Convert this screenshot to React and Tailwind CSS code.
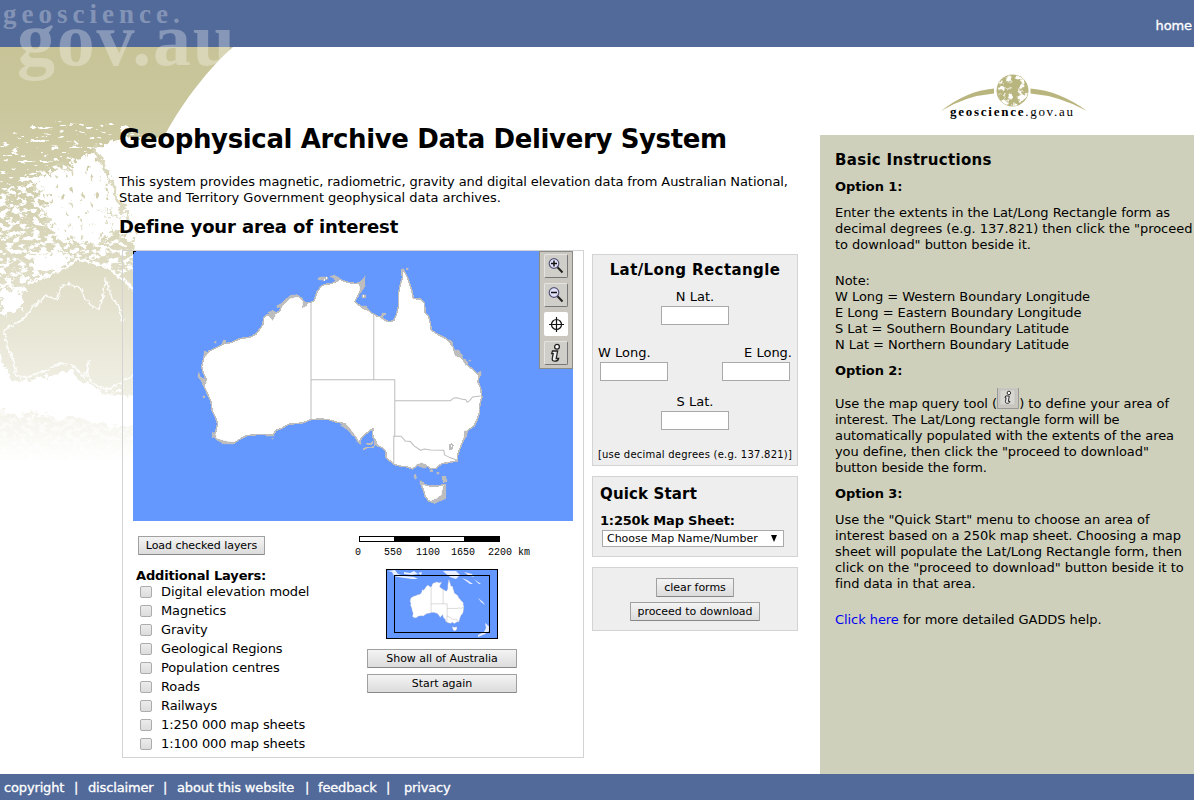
import React from "react";

const COAST =
  "M392 155 L400 152 405 140 410 124 420 110 430 102 452 99 470 92 478 86 492 92 505 96 528 99 540 95 552 84 552 102 546 112 538 124 532 138 524 152 534 162 548 174 562 178 575 188 590 197 605 200 612 208 626 214 640 210 648 192 654 168 654 130 660 100 666 82 664 58 672 62 680 78 686 96 694 118 698 142 710 146 722 146 732 158 734 186 744 198 750 220 752 238 766 248 780 256 796 264 808 276 818 290 824 310 842 318 852 336 868 350 884 364 896 376 892 394 900 412 904 440 898 462 896 490 888 512 880 528 862 540 852 562 840 590 832 612 830 632 800 638 784 640 766 654 752 656 736 646 722 640 708 648 696 656 680 650 660 648 640 642 626 630 616 622 616 604 604 592 590 586 586 572 578 562 576 548 578 534 566 544 554 552 542 566 534 576 526 562 514 546 500 534 494 520 470 516 444 508 420 506 392 508 366 518 326 522 304 534 288 540 278 554 240 552 200 556 180 566 160 580 130 578 110 568 98 556 106 546 112 520 106 502 96 482 92 454 84 436 76 418 68 400 78 388 68 364 64 348 72 318 86 302 108 292 130 280 154 276 180 264 210 260 228 250 238 236 248 222 250 202 262 192 276 204 282 190 298 182 304 166 318 152 332 136 350 134 364 144 374 158Z";
const TAS = "M720 700 L734 704 752 708 770 708 794 702 794 728 788 744 776 752 762 758 744 752 734 738 730 722Z";

function Australia({ borders = true, sw = 4.5 }) {
  return (
    <g fill="#fff" stroke="#bdbdbd" strokeWidth={sw} strokeLinejoin="round">
      <path d={COAST} />
      <path d={TAS} />
      <g fill="none" strokeWidth={borders ? 3 : 8}>
        <path d="M392 155V508M580 190V388M392 388H643V558H640V642M643 451H810L818 444 828 442 842 446 856 448 860 456 868 450 876 440 900 437" />
        <path d="M640 558H662L674 572 690 574 700 586 720 600 732 596 750 599 790 600 792 614 808 622 830 630" />
      </g>
      {borders && (
        <g>
          <path d="M808 584l6 -3 4 4 -4 10 -5 3z" />
          <path d="M548 598l10 -6 14 0 10 -3M558 580l14 2 6 -8" fill="none" strokeWidth="5" />
          <g fill="#bdbdbd" strokeWidth="1">
            <path d="M412 84l8 -5 20 -1 4 8 -14 4 -16 -2zM448 78l14 -5 10 6 8 4 -6 8 -10 -1 -4 -6zM262 186l16 -7 8 6 -2 12 -8 14 -4 -14zM288 166l16 -8 14 -14 14 -10 16 -2 10 6 -14 2 -16 4 -12 12 -14 14 -10 2zM534 96l12 -6 9 -16 -4 20 4 12 -8 12 -4 8 -8 8 4 -22z" />
            <path d="M544 132h12v10h-12zM664 54h6v8h-6zM678 52h6v5h-6zM604 188h12v5l-8 3v10h-6zM52 378l4 -14 5 16 14 6 4 12 -8 6 -10 -14zM102 276l6 -6v10zM128 270h8v10h-10zM68 436h5v6h-5zM72 302l8 2 -2 14h-8zM804 266l12 8 0 14 8 10 12 0 2 8 10 10 -6 6 -18 -6 -6 -22zM848 328l6 -2 10 12 -8 8zM864 329h6v4h-6zM892 366l8 -4 3 12 -8 6z" />
            <path d="M368 152l10 4 2 10 -14 6zM540 166h18l6 14 -14 -4zM478 524l18 -4 12 14 16 22 -8 0 -16 -18zM526 572l14 0 2 12zM580 566l10 16 -8 6zM706 644l18 -6 14 6v10l-14 -2zM748 658h8v6h-8zM700 674l6 -2 3 12 -6 4zM784 678l12 0 4 16 -12 4zM718 690l14 8 -4 8 -10 -4zM768 666h8v6h-8zM790 702l7 0 -2 44 -14 6 -18 8 -16 -6 20 -8 16 -12zM852 542l10 0 -4 18 -8 10z" />
            <path d="M274 564h5v3h-5zM256 553h26v5h-26zM112 566l28 8 22 2 -4 6 -32 -2zM96 546l8 2 4 12 -12 2z" />
          </g>
          <path d="M549 137h2M430 88h4M436 83h3" fill="none" stroke="#fff" />
        </g>
      )}
    </g>
  );
}

function GlobeBackdrop() {
  return (
    <svg className="absolute left-0 top-0 -z-10" width="250" height="430" viewBox="0 47 250 430" aria-hidden="true">
      <defs>
        <linearGradient id="olive" x1="0" y1="47" x2="0" y2="462" gradientUnits="userSpaceOnUse">
          <stop offset="0" stopColor="#c8c498" />
          <stop offset=".12" stopColor="#c9c69b" />
          <stop offset=".35" stopColor="#d2cfae" />
          <stop offset=".6" stopColor="#e3e1cd" />
          <stop offset=".85" stopColor="#f1f0e6" />
          <stop offset="1" stopColor="#fff" />
        </linearGradient>
        <filter id="rough" x="-10%" y="-10%" width="120%" height="120%" colorInterpolationFilters="sRGB">
          <feTurbulence type="fractalNoise" baseFrequency=".13" numOctaves="4" seed="4" result="n" />
          <feDisplacementMap in="SourceGraphic" in2="n" scale="17" xChannelSelector="R" yChannelSelector="G" />
        </filter>
        <filter id="jagged" x="-10%" y="-10%" width="120%" height="120%" colorInterpolationFilters="sRGB">
          <feTurbulence type="fractalNoise" baseFrequency=".25" numOctaves="3" seed="7" result="n" />
          <feDisplacementMap in="SourceGraphic" in2="n" scale="6" xChannelSelector="R" yChannelSelector="G" />
        </filter>
        <filter id="sparse" x="0" y="0" width="100%" height="100%" colorInterpolationFilters="sRGB">
          <feTurbulence type="fractalNoise" baseFrequency=".1 .3" numOctaves="5" seed="9" />
          <feColorMatrix values="0 0 0 0 0  0 0 0 0 0  0 0 0 0 0  14 0 0 0 -8.9" />
          <feComposite in2="SourceGraphic" operator="in" />
        </filter>
        <filter id="dense" x="0" y="0" width="100%" height="100%" colorInterpolationFilters="sRGB">
          <feTurbulence type="fractalNoise" baseFrequency=".15 .22" numOctaves="5" seed="21" />
          <feColorMatrix values="0 0 0 0 0  0 0 0 0 0  0 0 0 0 0  10 0 0 0 -4.9" />
          <feComposite in2="SourceGraphic" operator="in" />
        </filter>
        <filter id="islets" x="0" y="0" width="100%" height="100%" colorInterpolationFilters="sRGB">
          <feTurbulence type="fractalNoise" baseFrequency=".2 .14" numOctaves="5" seed="33" />
          <feColorMatrix values="0 0 0 0 1  0 0 0 0 1  0 0 0 0 1  10 0 0 0 -6.5" />
          <feComposite in2="SourceGraphic" operator="in" />
        </filter>
        <mask id="land" maskUnits="userSpaceOnUse" x="0" y="47" width="250" height="430">
          <path d="M0 47H233C210 67 184 100 166 133L150 152 137 190 134 260V477H0Z" fill="#fff" />
          <path filter="url(#sparse)" d="M0 138L40 122 90 120 160 130 120 140 90 150 50 168 0 200Z" />
          <path filter="url(#dense)" d="M0 195L26 175 60 164 60 210 100 235 145 225V280L120 272 75 256 30 282 0 300Z" />
          <g filter="url(#rough)">
            <path d="M36 180L60 169 90 154 108 142 124 138 180 138 168 250 140 236 118 230 100 244 60 240 50 226 44 206Z" />
            <path d="M0 290L22 286 24 308 6 314 0 314Z" />
            <path d="M32 256L58 250 74 258 62 270 36 272Z" />
            <path d="M-9 350L0 352 10 378 22 381 45 376 66 371 84 382 100 391 128 394 150 396V426H112L50 416 20 414 -9 410Z" />
          </g>
          <path filter="url(#islets)" d="M36 180L90 150 112 176 130 210 142 240 100 240 50 240Z" />
          <path d="M94 148C103 170 112 180 118 200L130 222" fill="none" stroke="#ccc" strokeWidth="3.500" filter="url(#rough)" />
          <path d="M32 188l12 3M44 205l4 22M60 165l12 4M102 208l18 10" fill="none" stroke="#ccc" strokeWidth="2" filter="url(#rough)" />
          <g fill="none" stroke="#000" strokeWidth="1.8" filter="url(#jagged)">
            <path strokeOpacity=".85" d="M4 330L22 320 34 306 46 296 57 299 61 287 69 284 82 289 84 298 92 306 99 309 103 296 106 280 112 298 119 306 123 322M4 330L7 346 14 362 16 376 28 377 45 371 60 363 74 366 84 377 89 361 87 376 96 386 110 389 134 375" />
            <path strokeWidth="2.500" d="M28 284L50 274 66 268 76 259 95 263 110 269 124 280 134 290" />
          </g>
          <path filter="url(#dense)" d="M0 408H140V462H0Z" opacity=".5" />
        </mask>
      </defs>
      <rect y="47" width="250" height="430" fill="url(#olive)" mask="url(#land)" />
    </svg>
  );
}

function InfoGlyph() {
  return (
    <g>
      <circle cx="13" cy="5.800" r="2.400" fill="#fff" stroke="#222" strokeWidth="1.3" />
      <path d="M8.500 10h5.100l-1.400 7.500h2.400c-.4 1.900-1.800 2.700-3.800 2.700-2.200 0-2.900-1.300-2.500-3l.9-4.600H7.700z" fill="#eee" stroke="#222" strokeWidth="1.3" />
    </g>
  );
}

function ToolButton({ kind }) {
  const active = kind === "target";
  return (
    <button
      aria-label={kind}
      className={
        active
          ? "block size-6 rounded-[2px] bg-white"
          : "block size-6 rounded-[2px] border border-t-[#e6e4e0] border-l-[#e6e4e0] border-r-[#777] border-b-[#777] bg-[#d0cec8]"
      }
    >
      <svg width="24" height="24" viewBox="0 0 24 24" className={active ? "block" : "-m-px block"}>
        {(kind === "in" || kind === "out") && (
          <g fill="none" stroke="#333" strokeWidth="1.2">
            <circle cx="10" cy="9.5" r="4.8" fill="#e2e2fa" stroke="#555577" />
            <path d="M13.5 13.3L18.5 18.5" stroke="#222" strokeWidth="2" />
            <path d={kind === "in" ? "M7 9.5h6M10 6.5v6" : "M7 9.5h6"} stroke="#111" strokeWidth="1.5" />
          </g>
        )}
        {active && <path d="M12.500 5v15M5 12.500h15M17.500 12.500a5 5 0 1 1-10 0a5 5 0 1 1 10 0" fill="none" stroke="#111" strokeWidth="1.2" />}
        {kind === "info" && <InfoGlyph />}
      </svg>
    </button>
  );
}

function Button({ className = "", children }) {
  return (
    <button
      className={
        "block h-[19px] rounded-[1px] border border-[#a0a0a0] border-b-[#888] bg-linear-to-b from-[#f4f4f4] to-[#dcdcdc] text-[11px] leading-[18px] tracking-[-0.04px] whitespace-nowrap text-black " +
        className
      }
    >
      {children}
    </button>
  );
}

function Field({ label, className = "", labelClass = "" }) {
  return (
    <label className={"flex flex-col text-[13px] leading-4 " + className}>
      <span className={labelClass}>{label}</span>
      <input className="mx-0.5 mt-px h-[19px] w-[68px] border border-[#a9a9a9] bg-white" />
    </label>
  );
}

const layers = [
  "Digital elevation model",
  "Magnetics",
  "Gravity",
  "Geological Regions",
  "Population centres",
  "Roads",
  "Railways",
  "1:250 000 map sheets",
  "1:100 000 map sheets",
];

function MapPanel() {
  return (
    <section className="ml-[122px] h-[508px] w-[462px] border border-[#d3d3d3] pl-2.5">
      <div className="flex h-[270px] w-[440px] bg-[#6598ff]">
        <svg width="407" height="270" viewBox="0 0 407 270" shapeRendering="crispEdges">
          <g transform="translate(47.300 -.7) scale(.3345 .3335)">
            <Australia />
          </g>
          <path d="M0 3V0H3" fill="none" stroke="#000" strokeWidth="1.5" />
        </svg>
        <div className="flex h-[118px] w-[34px] flex-col items-center gap-[5px] border border-[#8b8b86] bg-[#c9c7bf] pt-0.5">
          <ToolButton kind="in" />
          <ToolButton kind="out" />
          <ToolButton kind="target" />
          <ToolButton kind="info" />
        </div>
      </div>
      <div className="flex">
        <div className="w-[225px] pt-[15px] pl-[5px]">
          <Button className="w-[127px]">Load checked layers</Button>
          <p className="mt-[13px] -ml-0.5 text-[13px] leading-4 font-bold tracking-[-0.16px]">Additional Layers:</p>
          <ul className="-mt-0.5 ml-0.5">
            {layers.map((name) => (
              <li key={name}>
                <label className="flex h-[19px] items-center text-[13px] tracking-[-0.12px]">
                  <input
                    type="checkbox"
                    className="mt-px mr-[9px] size-3 appearance-none rounded-[2px] border border-[#acacac] bg-linear-to-b from-[#ececec] to-[#dcdcdc]"
                  />
                  <span className="whitespace-nowrap">{name}</span>
                </label>
              </li>
            ))}
          </ul>
        </div>
        <div className="pt-[15px]">
          <div className="ml-px flex h-1.5 w-[141px] border border-black bg-white">
            <span className="w-[34px]" />
            <span className="w-9 bg-black" />
            <span className="w-[34px]" />
            <span className="flex-1 bg-black" />
          </div>
          <div className="mt-[5px] -ml-[3px] flex font-['Liberation_Mono',monospace] text-[10px] leading-3 tracking-normal whitespace-nowrap">
            <span className="w-[29px]">0</span>
            <span className="w-8">550</span>
            <span className="w-[35px]">1100</span>
            <span className="w-[37px]">1650</span>
            <span>2200 km</span>
          </div>
          <svg width="112" height="70" viewBox="0 0 112 70" className="mt-2.5 ml-7 block">
            <rect x=".5" y=".5" width="111" height="69" fill="#6598ff" stroke="#000" />
            <path
              d="M2 2l4 1 2 4 4 1 14 2 6 0-4-2-10-1-6-2-3-4zM18 3l6 1 4-2 4 3-6 1-8-1zM32 4l3 2 1-3zM57 2h13l4 4-4 4-6-2-5-4zM76 9l5 2 6 4-3 0zM78 3l8 2 2 3-6-2zM88 10l7 5-2 0zM92 29l5 4 2 3-4-3zM99 54l5 4-1 4-4 3-7 3 0-2 6-3 2-4z"
              fill="#e9efff"
            />
            <g transform="translate(20 6.5) scale(.064 .073)">
              <Australia borders={false} />
            </g>
            <rect x="8.5" y="6.5" width="95" height="57" fill="none" stroke="#000" />
          </svg>
          <div className="mt-2.5 ml-[9px] flex w-[150px] flex-col gap-1.5">
            <Button>Show all of Australia</Button>
            <Button>Start again</Button>
          </div>
        </div>
      </div>
    </section>
  );
}

function Forms() {
  return (
    <div className="mt-1 ml-2 flex w-[206px] flex-col gap-2.5">
      <section className="h-[212px] border border-[#d3d3d3] bg-[#eee] px-[5px] pt-[7px]">
        <h3 className="text-center text-[15px] leading-4 font-bold tracking-[0.4px] whitespace-nowrap">Lat/Long Rectangle</h3>
        <Field label="N Lat." className="mt-[11px] items-center" />
        <div className="mt-5 flex justify-between">
          <Field label="W Long." className="items-center" labelClass="self-start" />
          <Field label="E Long." className="items-center" labelClass="self-end" />
        </div>
        <Field label="S Lat." className="mt-[13px] items-center" />
        <p className="mt-[17px] flex justify-center text-[10px] leading-4 tracking-[0.23px] whitespace-nowrap">[use decimal degrees (e.g. 137.821)]</p>
      </section>
      <section className="h-[81px] border border-[#d3d3d3] bg-[#eee] px-[7px] pt-[9px]">
        <h3 className="text-[15px] leading-4 font-bold tracking-[0.15px]">Quick Start</h3>
        <p className="mt-[11px] text-[13px] leading-4 font-bold tracking-[-0.18px]">1:250k Map Sheet:</p>
        <button className="mt-px ml-0.5 flex h-[17px] w-[182px] items-center justify-between border border-[#a9a9a9] bg-white pr-1.5 pl-1 text-[11px] tracking-[-0.02px] whitespace-nowrap">
          <span className="pt-px">Choose Map Name/Number</span>
          <svg width="6" height="7" viewBox="0 0 6 7">
            <path d="M0 0H6L3 7Z" />
          </svg>
        </button>
      </section>
      <section className="flex h-16 flex-col items-center gap-[5px] border border-[#d3d3d3] bg-[#eee] pt-2.5">
        <Button className="w-[78px]">clear forms</Button>
        <Button className="w-[130px]">proceed to download</Button>
      </section>
    </div>
  );
}

function Logo() {
  return (
    <svg width="160" height="54" viewBox="935 70 160 54">
      <defs>
        <filter id="logoLand" x="0" y="0" width="100%" height="100%" colorInterpolationFilters="sRGB">
          <feTurbulence type="fractalNoise" baseFrequency=".16" numOctaves="4" seed="5" />
          <feColorMatrix values="0 0 0 0 1  0 0 0 0 1  0 0 0 0 1  7 0 0 0 -3.5" />
          <feComposite in2="SourceGraphic" operator="in" />
        </filter>
      </defs>
      <path d="M941 111Q966 91 994 88.500V93.500Q965 96 941 111ZM1087 111Q1060 91 1030.500 88.500V93.500Q1060 96 1087 111Z" fill="#b9b57f" />
      <circle cx="1012.500" cy="90.500" r="16" fill="#b9b57f" />
      <circle cx="1012.500" cy="90.500" r="15.500" filter="url(#logoLand)" />
      <text x="950" y="116" fontFamily="Liberation Serif, serif" fontSize="13" textLength="123">
        <tspan fontWeight="bold">geoscience</tspan>.gov.au
      </text>
    </svg>
  );
}

function Sidebar() {
  return (
    <aside className="w-[374px] shrink-0">
      <div className="h-[88px] pt-[23px] pl-[115px]">
        <Logo />
      </div>
      <div className="h-[639px] bg-[#cfd0bb] pt-[17px] pl-[15px] text-[13px] leading-4 tracking-[-0.06px] whitespace-nowrap">
        <h2 className="text-[15px] font-bold tracking-[0.3px]">Basic Instructions</h2>
        <h3 className="mt-[11px] font-bold">Option 1:</h3>
        <p className="mt-2.5 tracking-[-0.04px]">
          Enter the extents in the Lat/Long Rectangle form as
          <br />
          decimal degrees (e.g. 137.821) then click the "proceed
          <br />
          to download" button beside it.
        </p>
        <p className="mt-5 tracking-[-0.04px]">
          Note:
          <br />W Long = Western Boundary Longitude
          <br />E Long = Eastern Boundary Longitude
          <br />S Lat = Southern Boundary Latitude
          <br />N Lat = Northern Boundary Latitude
        </p>
        <h3 className="mt-2.5 font-bold">Option 2:</h3>
        <div className="mt-[9px] flex h-6 items-end tracking-[-0.01px]">
          <span>Use the map query tool (</span>
          <svg width="22" height="21" viewBox="0 0 22 21" className="mb-[3px]">
            <rect width="22" height="21" fill="#c9c7bf" />
            <path d="M.5 0V20.500H21.500V0" fill="none" stroke="#999" />
            <rect x="3" y="2" width="15" height="15" fill="#d8d6d0" stroke="#bbb" strokeWidth=".6" />
            <g transform="translate(2.500 .8) scale(.72)">
              <InfoGlyph />
            </g>
          </svg>
          <span>) to define your area of</span>
        </div>
        <p className="tracking-[-0.09px]">
          interest. The Lat/Long rectangle form will be
          <br />
          automatically populated with the extents of the area
          <br />
          you define, then click the "proceed to download"
          <br />
          button beside the form.
        </p>
        <h3 className="mt-2.5 font-bold">Option 3:</h3>
        <p className="mt-2.5">
          Use the "Quick Start" menu to choose an area of
          <br />
          interest based on a 250k map sheet. Choosing a map
          <br />
          sheet will populate the Lat/Long Rectangle form, then
          <br />
          click on the "proceed to download" button beside it to
          <br />
          find data in that area.
        </p>
        <p className="mt-5">
          <a className="text-[#0000ee]">Click here</a> for more detailed GADDS help.
        </p>
      </div>
    </aside>
  );
}

export default function App() {
  return (
    <div className="relative isolate h-[810px] w-[1194px] overflow-hidden bg-white font-['DejaVu_Sans',Verdana,sans-serif] text-black">
      <header className="flex h-[47px] items-center justify-end bg-[#526a9a] pt-1 pr-0.5 text-[13px] tracking-[-0.1px] text-white [-webkit-text-stroke:0.3px_white]">
        <a>home</a>
      </header>
      <div aria-hidden="true" className="pointer-events-none absolute top-0 left-0 z-10 font-['Liberation_Serif',serif] font-bold text-white/30">
        <div className="pl-[3px] text-[27px] leading-7 tracking-[5px]">geoscience.</div>
        <div className="-mt-[27px] pl-[17px] text-[76px] leading-[76px] tracking-[1.8px]">gov.au</div>
      </div>
      <main className="relative isolate flex h-[727px]">
        <GlobeBackdrop />
        <div className="w-[820px] shrink-0">
          <div className="pt-[76px] pl-[119px] whitespace-nowrap">
            <h1 className="text-[26px] leading-8 font-bold tracking-[-0.37px]">Geophysical Archive Data Delivery System</h1>
            <p className="mt-[19px] text-[13px] leading-4 tracking-[-0.08px]">
              This system provides magnetic, radiometric, gravity and digital elevation data from Australian National,
              <br />
              <span className="tracking-[-0.04px]">State and Territory Government geophysical data archives.</span>
            </p>
            <h2 className="mt-2.5 h-[34px] text-[18px] leading-[22px] font-bold tracking-[-0.13px]">Define your area of interest</h2>
          </div>
          <div className="flex items-start">
            <MapPanel />
            <Forms />
          </div>
        </div>
        <Sidebar />
      </main>
      <footer className="flex h-[26px] items-center bg-[#526a9a] pt-px pl-1 text-[13px] tracking-[-0.15px] whitespace-pre text-white [-webkit-text-stroke:0.3px_white]">
        <a className="w-[70px]">copyright</a>
        <span className="w-[14px]">|</span>
        <a className="w-[75px]">disclaimer</a>
        <span className="w-[14px]">|</span>
        <a className="w-[128px]">about this website</a>
        <span className="w-[13px]">|</span>
        <a className="w-[68px]">feedback</a>
        <span className="w-[18px]">|</span>
        <a>privacy</a>
      </footer>
    </div>
  );
}
